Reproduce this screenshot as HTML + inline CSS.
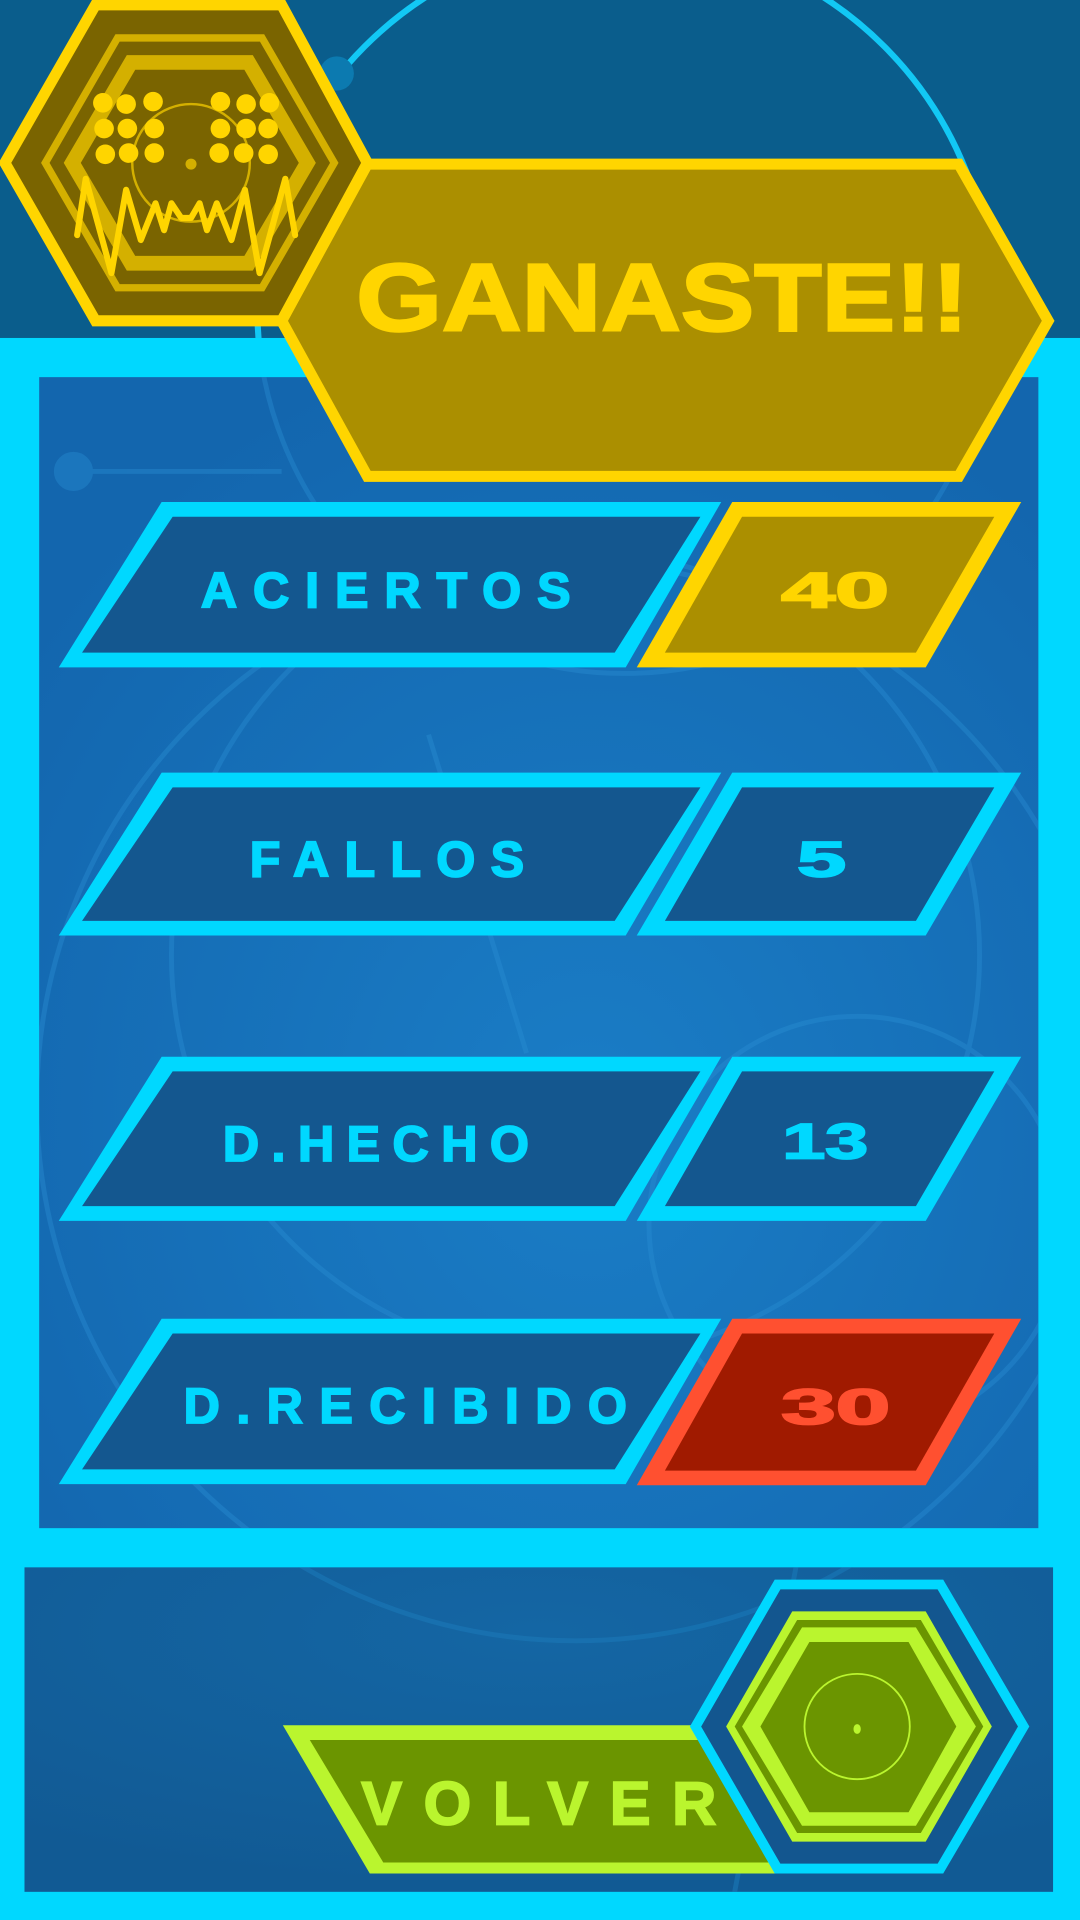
<!DOCTYPE html>
<html><head><meta charset="utf-8"><style>
html,body{margin:0;padding:0;background:#0a5d8c;}
svg{display:block;}
text{font-family:"Liberation Sans",sans-serif;font-weight:bold;}
</style></head><body>
<svg width="1080" height="1920" viewBox="0 0 882 1568" xmlns="http://www.w3.org/2000/svg">
<defs>
<radialGradient id="pg" cx="0.55" cy="0.65" r="0.7">
<stop offset="0" stop-color="#1a7dc6"/><stop offset="1" stop-color="#1366ae"/>
</radialGradient>
<radialGradient id="bg2" cx="0.5" cy="0.2" r="0.8">
<stop offset="0" stop-color="#1466a4"/><stop offset="1" stop-color="#115a94"/>
</radialGradient>
<clipPath id="top"><rect x="0" y="0" width="882" height="276"/></clipPath>
<clipPath id="pan"><rect x="32" y="308" width="816" height="940"/></clipPath>
<clipPath id="bot"><rect x="20" y="1280" width="840" height="265"/></clipPath>
</defs>
<rect x="0" y="0" width="882" height="276" fill="#0a5d8c"/>
<g clip-path="url(#top)">
<circle cx="510" cy="250" r="300" fill="none" stroke="#12c8f5" stroke-width="5"/>
<circle cx="275" cy="60" r="14" fill="#0c7ab0"/>
</g>
<rect x="0" y="276" width="882" height="1292" fill="#00d8ff"/>
<rect x="32" y="308" width="816" height="940" fill="url(#pg)"/>
<g clip-path="url(#pan)" fill="none" stroke="#2a8fd4" stroke-width="4" opacity="0.4">
<circle cx="510" cy="250" r="300"/>
<circle cx="470" cy="900" r="440"/>
<circle cx="700" cy="1000" r="170"/>
<circle cx="470" cy="780" r="330"/>
<line x1="60" y1="385" x2="230" y2="385"/>
<line x1="350" y1="600" x2="430" y2="860"/>
<circle cx="60" cy="385" r="14" fill="#2a8fd4"/>
</g>
<rect x="20" y="1280" width="840" height="265" fill="url(#bg2)"/>
<g clip-path="url(#bot)" fill="none" stroke="#1a78b8" stroke-width="4" opacity="0.6">
<circle cx="470" cy="900" r="440"/>
<line x1="650" y1="1280" x2="600" y2="1545"/>
</g>

<polygon points="230,262 300,134 783,134 856,262 783,389 300,389" fill="#ab8f00" stroke="#ffd500" stroke-width="9"/>
<text x="291" y="270" font-size="78" fill="#ffd500" stroke="#ffd500" stroke-width="2" textLength="500" lengthAdjust="spacingAndGlyphs">GANASTE!!</text>

<polygon points="4,133 78,4 230,4 300,133 230,262 78,262" fill="#7a6400" stroke="#ffd500" stroke-width="9"/>
<polygon points="37,133 96,31 214,31 273,133 214,235 96,235" fill="none" stroke="#d4b000" stroke-width="6"/>
<polygon points="59,133 107,51 203,51 251,133 203,215 107,215" fill="none" stroke="#d4b000" stroke-width="12"/>
<circle cx="156" cy="133" r="48" fill="none" stroke="#d4b000" stroke-width="2"/>
<circle cx="156" cy="134" r="4.5" fill="#d4b000"/>
<g fill="#ffd500">
<circle cx="84" cy="84" r="8"/><circle cx="103" cy="85" r="8"/><circle cx="125" cy="83" r="8"/>
<circle cx="85" cy="105" r="8"/><circle cx="104" cy="105" r="8"/><circle cx="126" cy="105" r="8"/>
<circle cx="86" cy="126" r="8"/><circle cx="105" cy="125" r="8"/><circle cx="126" cy="125" r="8"/>
<circle cx="180" cy="83" r="8"/><circle cx="201" cy="85" r="8"/><circle cx="220" cy="84" r="8"/>
<circle cx="180" cy="105" r="8"/><circle cx="201" cy="105" r="8"/><circle cx="219" cy="105" r="8"/>
<circle cx="179" cy="125" r="8"/><circle cx="199" cy="125" r="8"/><circle cx="219" cy="126" r="8"/>
</g>
<polyline points="63,192 70,146 91,223 103,155 115,196 127,166 134,188 140,166 148,178 156,178 163,166 169,188 177,166 189,196 200,155 212,223 233,146 241,192" fill="none" stroke="#ffd500" stroke-width="5" stroke-linejoin="round" stroke-linecap="round"/>

<g stroke-width="1.5">
<polygon points="48,545 132,410 589,410 511,545" fill="#00d8ff"/>
<polygon points="67,533 141,422 572,422 502,533" fill="#14578f"/>
<polygon points="520,545 598,410 834,410 756,545" fill="#ffd500"/>
<polygon points="543,533 606,422 812,422 748,533" fill="#ab8f00"/>
<text x="164" y="496" font-size="41" fill="#00d8ff" stroke="#00d8ff" textLength="302" lengthAdjust="spacing">ACIERTOS</text>
<text x="638" y="496" font-size="41" fill="#ffd500" stroke="#ffd500" textLength="88" lengthAdjust="spacingAndGlyphs">40</text>
</g>
<g stroke-width="1.5">
<polygon points="48,764 132,631 589,631 511,764" fill="#00d8ff"/>
<polygon points="67,752 141,643 572,643 502,752" fill="#14578f"/>
<polygon points="520,764 598,631 834,631 756,764" fill="#00d8ff"/>
<polygon points="543,752 606,643 812,643 748,752" fill="#14578f"/>
<text x="204" y="716" font-size="41" fill="#00d8ff" stroke="#00d8ff" textLength="224" lengthAdjust="spacing">FALLOS</text>
<text x="651" y="716" font-size="41" fill="#00d8ff" stroke="#00d8ff" textLength="40" lengthAdjust="spacingAndGlyphs">5</text>
</g>
<g stroke-width="1.5">
<polygon points="48,997 132,863 589,863 511,997" fill="#00d8ff"/>
<polygon points="67,985 141,875 572,875 502,985" fill="#14578f"/>
<polygon points="520,997 598,863 834,863 756,997" fill="#00d8ff"/>
<polygon points="543,985 606,875 812,875 748,985" fill="#14578f"/>
<text x="182" y="948" font-size="41" fill="#00d8ff" stroke="#00d8ff" textLength="250" lengthAdjust="spacing">D.HECHO</text>
<text x="639" y="946" font-size="41" fill="#00d8ff" stroke="#00d8ff" textLength="70" lengthAdjust="spacingAndGlyphs">13</text>
</g>
<g stroke-width="1.5">
<polygon points="48,1212 132,1077 589,1077 511,1212" fill="#00d8ff"/>
<polygon points="67,1200 141,1089 572,1089 502,1200" fill="#14578f"/>
<polygon points="520,1213 598,1077 834,1077 756,1213" fill="#ff5030"/>
<polygon points="543,1201 606,1089 812,1089 748,1201" fill="#a01a00"/>
<text x="150" y="1162" font-size="41" fill="#00d8ff" stroke="#00d8ff" textLength="362" lengthAdjust="spacing">D.RECIBIDO</text>
<text x="638" y="1163" font-size="41" fill="#ff5030" stroke="#ff5030" textLength="89" lengthAdjust="spacingAndGlyphs">30</text>
</g>

<polygon points="231,1409 640,1409 660,1530 302,1530" fill="#baf52e"/>
<polygon points="253,1421 640,1421 650,1521 313,1521" fill="#6b9500"/>
<text x="295" y="1490" font-size="50" fill="#baf52e" stroke="#baf52e" stroke-width="1.5" textLength="290" lengthAdjust="spacing">VOLVER</text>

<polygon points="568,1410 635,1294 768,1294 836,1410 768,1526 635,1526" fill="#13568f" stroke="#00d8ff" stroke-width="8"/>
<polygon points="593,1410 647,1316 756,1316 810,1410 756,1504 647,1504" fill="#baf52e"/>
<polygon points="600,1410 651,1323 752,1323 803,1410 752,1497 651,1497" fill="#6b9500"/>
<polygon points="606,1410 655,1329 748,1329 797,1410 748,1491 655,1491" fill="#baf52e"/>
<polygon points="621,1410 661,1341 742,1341 781,1410 742,1480 661,1480" fill="#6b9500"/>
<circle cx="700" cy="1410" r="43" fill="none" stroke="#baf52e" stroke-width="1.5"/>
<ellipse cx="700" cy="1412" rx="3" ry="4" fill="#baf52e"/>
</svg>
</body></html>
